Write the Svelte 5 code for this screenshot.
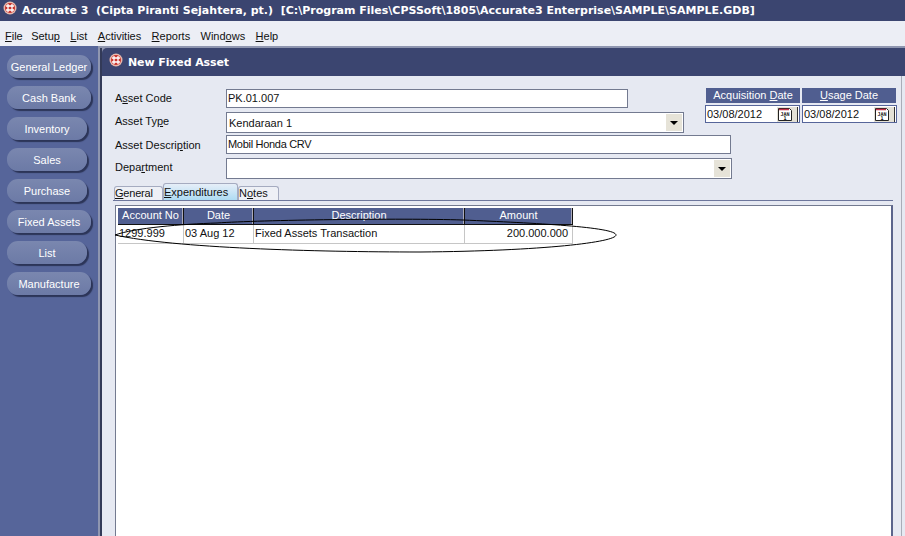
<script>
  const menus = [
    { key: 'F', rest: 'ile' },
    { pre: 'Setu', key: 'p', rest: '' },
    { key: 'L', rest: 'ist' },
    { key: 'A', rest: 'ctivities' },
    { key: 'R', rest: 'eports' },
    { pre: 'Wind', key: 'o', rest: 'ws' },
    { key: 'H', rest: 'elp' }
  ];
  const modules = [
    { label: 'General Ledger', w: 84 },
    { label: 'Cash Bank', w: 84 },
    { label: 'Inventory', w: 80 },
    { label: 'Sales', w: 80 },
    { label: 'Purchase', w: 80 },
    { label: 'Fixed Assets', w: 84 },
    { label: 'List', w: 80 },
    { label: 'Manufacture', w: 84 }
  ];
</script>

{#snippet logo()}
  <svg class="logo" width="14" height="14" viewBox="0 0 14 14">
    <circle cx="7" cy="7" r="6.5" fill="#e8b9ae" />
    <circle cx="7" cy="7" r="5" fill="#c8322c" />
    <path d="M5 3v8M9 3v8M3 5h8M3 9h8" stroke="#fff" stroke-width="1.3" />
  </svg>
{/snippet}

{#snippet calendar()}
  <span class="cal">
    <svg width="21" height="15" viewBox="0 0 21 15">
      <rect x="0" y="0" width="21" height="15" fill="#e4e1d6" />
      <path d="M20.5 0v15" stroke="#333" />
      <path d="M1.5 13.5V1.5h11l2 2v10z" fill="#fff" stroke="#222" />
      <path d="M2 2.5h10" stroke="#c4324a" stroke-width="1.5" />
      <text x="8" y="8.5" class="cal-text">JAN</text>
      <text x="8" y="13" class="cal-text">1</text>
    </svg>
  </span>
{/snippet}

{#snippet combo()}
  <span class="drop"><i></i></span>
{/snippet}

<div class="app">
  <header class="titlebar">
    {@render logo()}
    <span>Accurate 3&nbsp; (Cipta Piranti Sejahtera, pt.)&nbsp; [C:\Program Files\CPSSoft\1805\Accurate3 Enterprise\SAMPLE\SAMPLE.GDB]</span>
  </header>

  <nav class="menubar">
    {#each menus as m}
      <span>{m.pre ?? ''}<u>{m.key}</u>{m.rest}</span>
    {/each}
  </nav>

  <div class="main">
    <aside class="sidebar">
      {#each modules as m}
        <button class="pill" style="width: {m.w}px">{m.label}</button>
      {/each}
    </aside>

    <section class="window">
      <div class="win-title">
        {@render logo()}
        <span>New Fixed Asset</span>
      </div>

      <div class="win-body">
        <div class="form-top">
          <div class="form-left">
            <div class="row">
              <label>A<u>s</u>set Code</label>
              <div class="input code">PK.01.007</div>
            </div>
            <div class="row">
              <label>Asset Ty<u>p</u>e</label>
              <div class="input combo type"><span class="val">Kendaraan 1</span>{@render combo()}</div>
            </div>
          </div>
          <div class="dates">
            <div class="date">
              <div class="date-head first">Acquisition <u>D</u>ate</div>
              <div class="date-box"><span>03/08/2012</span>{@render calendar()}</div>
            </div>
            <div class="date">
              <div class="date-head second"><u>U</u>sage Date</div>
              <div class="date-box"><span>03/08/2012</span>{@render calendar()}</div>
            </div>
          </div>
        </div>
        <div class="row r3">
          <label>Asset Descri<u>p</u>tion</label>
          <div class="input desc">Mobil Honda CRV</div>
        </div>
        <div class="row r4">
          <label>Depa<u>r</u>tment</label>
          <div class="input combo dept">{@render combo()}</div>
        </div>

        <div class="tabs">
          <span class="tab t1"><u>G</u>eneral</span>
          <span class="tab t2 active"><u>E</u>xpenditures</span>
          <span class="tab t3">N<u>o</u>tes</span>
        </div>

        <div class="panel">
          <div class="grid-box">
            <div class="cols head">
              <div>Account No</div>
              <div>Date</div>
              <div>Description</div>
              <div>Amount</div>
            </div>
            <div class="cols data">
              <div>1299.999</div>
              <div>03 Aug 12</div>
              <div>Fixed Assets Transaction</div>
              <div class="c-amt">200.000.000</div>
            </div>
            <svg class="ellipse" width="510" height="40" viewBox="0 0 510 40">
              <path d="M1 17C20 10 68 6 103 5C146 2 286 0 349 2C420 5 502 9 502 17C502 24 430 33 306 34C200 34 60 30 1 17Z" fill="none" stroke="#000" stroke-width="1" />
            </svg>
          </div>
        </div>
      </div>
    </section>
  </div>
</div>

<style>
  :global(body) {
    margin: 0;
    overflow: hidden;
  }

  .app {
    width: 905px;
    height: 536px;
    display: flex;
    flex-direction: column;
    overflow: hidden;
    font-family: "Liberation Sans", Arial, sans-serif;
    font-size: 11px;
    color: #111;
  }

  .titlebar {
    height: 21px;
    flex: none;
    background: #3b4570;
    color: #fff;
    display: flex;
    align-items: center;
    gap: 5px;
    padding-left: 3px;
    font-family: "DejaVu Sans", sans-serif;
    font-weight: bold;
    font-size: 11px;
    white-space: nowrap;
  }

  .titlebar .logo {
    margin-top: -5px;
  }

  .menubar {
    height: 25px;
    flex: none;
    box-sizing: border-box;
    background: #eceef5;
    display: flex;
    align-items: center;
    gap: 10.4px;
    padding: 4px 0 0 5px;
  }

  .menubar span:first-child {
    margin-right: -2px;
  }

  .main {
    flex: 1;
    display: flex;
    min-height: 0;
    background: #8f96b0;
  }

  .sidebar {
    width: 98px;
    flex: none;
    background: #56659a;
    display: flex;
    flex-direction: column;
    align-items: flex-start;
    gap: 8px;
    padding: 9px 0 0 7px;
    box-sizing: border-box;
  }

  .pill {
    height: 23px;
    padding: 0;
    border: 0;
    border-radius: 11px;
    background: linear-gradient(#7a87af, #6c7aa6);
    color: #fff;
    font: inherit;
    box-shadow: 2px 2px 1px #2c3558;
  }

  .window {
    flex: 1;
    margin: 2px 0 0 2px;
    display: flex;
    flex-direction: column;
    min-width: 0;
    border-left: 2px solid #333a58;
  }

  .win-title {
    height: 28px;
    flex: none;
    background: #3b4570;
    border-radius: 5px 0 0 0;
    color: #fff;
    display: flex;
    align-items: center;
    gap: 5px;
    padding-left: 7px;
    font-family: "DejaVu Sans", sans-serif;
    font-weight: bold;
    font-size: 11px;
    letter-spacing: -0.1px;
  }

  .win-title .logo {
    margin-top: -5px;
  }

  .win-body {
    flex: 1;
    background: #e6e9f2;
    padding: 13px 0 0 11px;
    display: flex;
    flex-direction: column;
    min-height: 0;
    box-shadow: inset -3px 0 0 #e6e9f2, inset -4px 0 0 #a9adb8;
  }

  .form-top {
    display: flex;
    height: 46px;
    flex: none;
  }

  .form-left {
    width: 592px;
    display: flex;
    flex-direction: column;
    gap: 4px;
  }

  .row {
    display: flex;
    align-items: flex-start;
  }

  .row label {
    width: 113px;
    flex: none;
    padding: 3px 0 0 2px;
    box-sizing: border-box;
  }

  .r3 label {
    padding-top: 4px;
  }

  .r4 {
    margin-top: 4px;
  }

  .input {
    box-sizing: border-box;
    background: #fff;
    border: 1px solid #737a90;
    padding: 2px 0 0 1px;
  }

  .code { width: 402px; height: 19px; }
  .desc { width: 505px; height: 19px; letter-spacing: -0.3px; }
  .type { width: 458px; height: 21px; }
  .dept { width: 506px; height: 21px; }

  .combo {
    display: flex;
    justify-content: flex-end;
    padding: 1px;
    position: relative;
  }

  .combo .val {
    position: absolute;
    left: 2px;
    top: 4px;
  }

  .drop {
    width: 16px;
    height: 17px;
    background: #e6e3d8;
    display: flex;
    align-items: center;
    justify-content: center;
  }

  .drop i {
    width: 0;
    height: 0;
    border: 4px solid transparent;
    border-top: 4px solid #000;
    border-bottom: 0;
  }

  .dates {
    display: flex;
    margin: -1px 0 0 0;
    gap: 2px;
  }

  .date {
    width: 95px;
  }

  .date-head {
    height: 15px;
    background: #505e90;
    color: #fff;
    text-align: center;
    line-height: 15px;
    margin-bottom: 2px;
  }

  .date-head.first {
    margin-left: 1px;
  }

  .date-head.second {
    margin-right: 1px;
  }

  .date-box {
    height: 18px;
    box-sizing: border-box;
    background: #fff;
    border: 1px solid #56659a;
    display: flex;
    align-items: center;
    justify-content: space-between;
    padding-left: 1px;
  }

  .cal {
    display: block;
    height: 15px;
    margin-right: 1px;
  }

  .cal-text {
    font-family: "DejaVu Sans Mono", monospace;
    font-size: 5px;
    font-weight: bold;
    text-anchor: middle;
    fill: #111;
  }

  .tabs {
    display: flex;
    height: 17px;
    flex: none;
    margin: 4px 0 0 1px;
    align-items: flex-end;
  }

  .tab {
    box-sizing: border-box;
    height: 14px;
    line-height: 13px;
    border: 1px solid #a5abc0;
    border-bottom: 0;
    border-radius: 3px 3px 0 0;
    background: #eef0f6;
    padding-left: 0;
  }

  .t1 { width: 49px; letter-spacing: -0.2px; }
  .t2 { width: 75px; }
  .t3 { width: 41px; }

  .tab.active {
    height: 17px;
    line-height: 16px;
    background: linear-gradient(#e6eef8, #aedcf3);
  }

  .panel {
    flex: 1;
    min-height: 0;
    margin-right: 12px;
    box-sizing: border-box;
    border-top: 1px solid #6d769c;
    padding: 4px 0 0 2px;
  }

  .grid-box {
    position: relative;
    height: 100%;
    box-sizing: border-box;
    background: #fff;
    border: 1px solid #737a90;
    border-bottom: 0;
    border-right: 2px solid #5c658c;
    padding: 2px 0 0 2px;
  }

  .cols {
    display: grid;
    grid-template-columns: 66px 70px 211px 108px;
    width: 455px;
  }

  .head {
    height: 16px;
    background: #505e90;
    color: #fff;
    text-align: center;
    line-height: 15px;
    border-bottom: 1px solid #111;
  }

  .head > div {
    border-right: 1px solid #111;
    box-shadow: inset -1px 0 0 #aab;
  }

  .data {
    height: 18px;
    line-height: 17px;
    border-bottom: 1px solid #c6c6c6;
  }

  .data > div {
    border-right: 1px solid #c6c6c6;
    padding-left: 1px;
    white-space: nowrap;
  }

  .data .c-amt {
    text-align: right;
    padding: 0 4px 0 0;
  }

  .ellipse {
    position: absolute;
    left: -2px;
    top: 12px;
  }
</style>
